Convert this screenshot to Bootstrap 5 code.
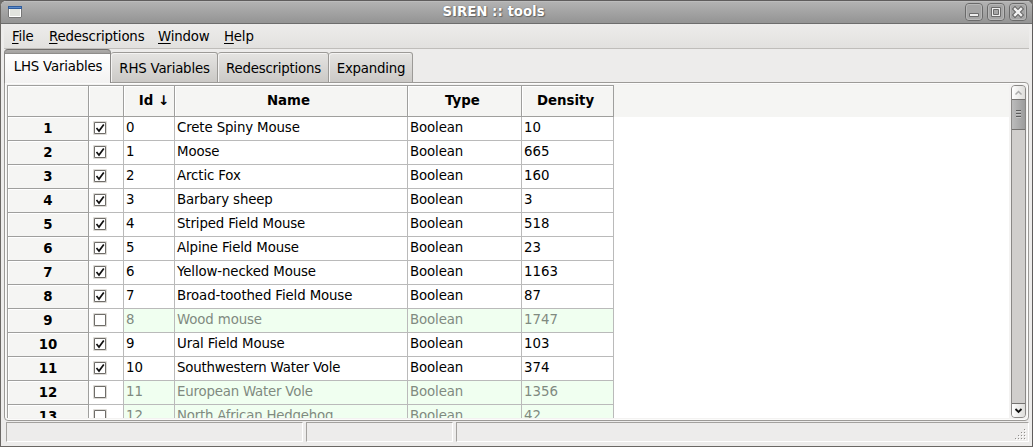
<!DOCTYPE html>
<html lang="en">
<head>
<meta charset="utf-8">
<title>SIREN :: tools</title>
<link href="https://cdn.jsdelivr.net/npm/bootstrap@5.3.0/dist/css/bootstrap.min.css" rel="stylesheet">
<style>
body{font-family:"DejaVu Sans",sans-serif;font-size:13.33px;line-height:16px;color:#000;background:#706e6b;height:447px;overflow:hidden}
.win{height:447px;background:#edeceb;border:1px solid #5f5d5d;border-bottom:1px solid #6b6865;border-left-color:#6b6865;border-radius:6px 6px 0 0;overflow:hidden}
.titlebar{height:23px;background:linear-gradient(#c6c6c6 0,#b2b2b2 1px,#959595 21px);border-bottom:1px solid #6d6d6d;color:#fff;padding:0 5px 0 7px}
.titlebar .caption{font-weight:700;text-shadow:0 0 1px #555,1px 1px 1px #666;line-height:22px;padding-right:0}
.titlebar .btns{gap:4px}
.menubar{height:25px;background:linear-gradient(#edeceb,#e2e1df);border-bottom:1px solid #bfbdba;margin:0 3px;padding-left:8px}
.menubar a{color:#000;text-decoration:none;line-height:25px;height:24px;white-space:nowrap;letter-spacing:-.18px}
.menubar u{text-underline-offset:2px;text-decoration-thickness:1px}
.tabs{height:34px;padding-left:3px;position:relative;z-index:1;margin-bottom:-1px}
.tabs .tb{height:31px;border:1px solid #9c9a97;border-left-width:0;border-radius:3px 3px 0 0;background:linear-gradient(#e5e4e2,#cbc9c6);line-height:31px;white-space:nowrap;box-shadow:inset 1px 1px 0 #f4f3f2;text-align:center;color:#000;padding-left:1px;letter-spacing:-.2px}
.tabs .tb.sel{height:34px;border:1px solid #8a8886;border-bottom:0;border-top-color:#6f6d6b;background:linear-gradient(#aeacaa 0,#a3a19f 3px,#8f8d8b 3px,#8f8d8b 4px,#fff 4px,#f3f2f1 100%);line-height:33px;border-radius:4px 4px 0 0;box-shadow:none}
.pane{height:339px;width:1025px;margin-left:3px;border:1px solid #9c9a97;border-radius:0 4px 4px 4px;background:#f3f2f1;padding:2px;box-shadow:inset 0 0 0 1px #fcfcfb}
.view{width:1002px;height:333px;background:linear-gradient(#f5f5f3 32px,#fff 32px);overflow:hidden}
.sheet{width:607px;border-left:1px solid #9f9f9d}
.sheet .line{display:flex;height:24px}
.sheet .line>div{border-right:1px solid #bababa;border-bottom:1px solid #bababa;padding:2px 0 0 2px;line-height:17px;white-space:nowrap;background:#fff;flex:none}
.sheet .line>.val{letter-spacing:-.12px}
.sheet .line>.val.c2,.sheet .line>.val.c5{letter-spacing:0}
.sheet .line>.hd{background:#f5f5f3;border-color:#9f9f9d;box-shadow:inset 1px 1px 0 #fff;font-weight:700;text-align:center;padding:3px 0 0}
.sheet .heads{height:32px;border-top:1px solid #9f9f9d}
.sheet .heads>.hd{padding-top:6px!important}
.sheet .off>.val{background:#f0fff0;color:#808a80}
.c0{width:81px}.c1{width:35px}.c2{width:51px}.c3{width:233px}.c4{width:114px}.c5{width:92px}
.sheet .line>.c1:not(.hd){padding:4px 0 0 4px}
.c1 svg,.btns svg,.sbar svg{display:block}
.sbar{width:15px;height:333px;border:1px solid #8a8886;border-radius:4px;background:#d0cecc;overflow:hidden}
.sbar .arr{height:13px;background:linear-gradient(90deg,#fff,#deddda)}
.sbar .thumb{height:31px;background:linear-gradient(90deg,#bcbcbc,#9c9c9c);border:solid #757371;border-width:1px 0}
.status{height:20px;margin:1px 3px 0 5px;gap:3px}
.status .cell{border:1px solid;border-color:#a3a19e #fff #fff #a3a19e;height:20px;background:#edeceb}
</style>
</head>
<body>
<div class="win d-flex flex-column">
  <header class="titlebar d-flex align-items-center flex-shrink-0">
    <svg width="14" height="12" viewBox="0 0 14 12"><rect x=".5" y=".5" width="13" height="11" fill="#e2e4df" stroke="#fff"/><path d="M0 0h14v3H0z" fill="#2f5c9c"/><path d="M1 1h12v1H1z" fill="#5b8acb"/><path d="M.5 3v8.500h13V3" fill="none" stroke="#777"/><path d="M1.500 3v7.500h11V3" fill="none" stroke="#fff"/></svg>
    <div class="caption flex-grow-1 text-center">SIREN :: tools</div>
    <div class="btns d-flex">
      <svg width="18" height="18"><use href="#frame"/><path d="M4.500 10.500h9v3h-9z" fill="#eee" stroke="#6b6b6b"/></svg>
      <svg width="18" height="18"><use href="#frame"/><path d="M4.500 4.500h9v9h-9z" fill="#eee" stroke="#6b6b6b"/><path d="M6.500 6.500h5v5h-5z" fill="#a6a6a6" stroke="#6b6b6b"/></svg>
      <svg width="18" height="18"><use href="#frame"/><path d="M6 6l6 6m0-6l-6 6" stroke="#666" stroke-width="4.500" stroke-linecap="square"/><path d="M6 6l6 6m0-6l-6 6" stroke="#f2f2f2" stroke-width="2.400" stroke-linecap="square"/></svg>
    </div>
  </header>
  <nav class="menubar d-flex flex-shrink-0">
    <a href="#" style="width:37px"><u>F</u>ile</a><a href="#" style="width:109px"><u>R</u>edescriptions</a><a href="#" style="width:66px"><u>W</u>indow</a><a href="#"><u>H</u>elp</a>
  </nav>
  <div class="tabs d-flex align-items-end flex-shrink-0">
    <div class="tb sel" style="width:107px">LHS Variables</div><div class="tb" style="width:107px">RHS Variables</div><div class="tb" style="width:111px">Redescriptions</div><div class="tb" style="width:84px">Expanding</div>
  </div>
  <main class="pane d-flex justify-content-between flex-shrink-0">
    <div class="view">
      <div class="sheet" id="sheet">
        <div class="line heads"><div class="hd c0"></div><div class="hd c1"></div><div class="hd c2" style="padding-left:10px">Id ↓</div><div class="hd c3" style="padding-right:5px">Name</div><div class="hd c4" style="padding-right:4px">Type</div><div class="hd c5" style="padding-right:4px">Density</div></div>
      </div>
    </div>
    <div class="sbar">
      <div class="arr"><svg width="13" height="13"><path d="M3.500 8.500l3-3 3 3" fill="none" stroke="#aaa" stroke-width="1.500"/></svg></div>
      <div class="thumb"><svg width="13" height="29"><path d="M4 10.500h5M4 13.500h5M4 16.500h5" stroke="#5c5c5c"/><path d="M4 11.500h5M4 14.500h5M4 17.500h5" stroke="#c4c4c4"/></svg></div>
      <div style="height:273px"></div>
      <div class="arr" style="height:14px;border-top:1px solid #757371"><svg width="13" height="13"><path d="M3.500 5l3 3 3-3" fill="none" stroke="#111" stroke-width="1.800"/></svg></div>
    </div>
  </main>
  <footer class="status d-flex flex-shrink-0">
    <div class="cell" style="width:297px"></div><div class="cell" style="width:147px"></div>
    <div class="cell flex-grow-1 d-flex justify-content-end align-items-end"><svg width="14" height="13" id="grip"></svg></div>
  </footer>
</div>
<svg width="0" height="0" class="position-absolute">
  <symbol id="frame"><rect x=".5" y=".5" width="17" height="17" rx="3.500" fill="#a5a5a5" stroke="#6a6a6a"/><rect x="1.500" y="1.500" width="15" height="15" rx="2.500" fill="none" stroke="#b8b8b8"/></symbol>
  <symbol id="box"><path d="M.5.5h13v13H.5z" fill="none" stroke="#dddbd7"/><path d="M1.500 1.500h11v11h-11z" fill="#fff" stroke="#6f6d69"/></symbol>
  <symbol id="tick"><path d="M3.500 7l2.500 3L10.800 3.500" fill="none" stroke="#111" stroke-width="1.700"/></symbol>
</svg>
<script>
const rows=[["Crete Spiny Mouse",10],["Moose",665],["Arctic Fox",160],["Barbary sheep",3],["Striped Field Mouse",518],["Alpine Field Mouse",23],["Yellow-necked Mouse",1163],["Broad-toothed Field Mouse",87],["Wood mouse",1747,1],["Ural Field Mouse",103],["Southwestern Water Vole",374],["European Water Vole",1356,1],["North African Hedgehog",42,1]];
document.getElementById("sheet").insertAdjacentHTML("beforeend",rows.map(([n,d,off],i)=>`<div class="line${off?" off":""}"><div class="hd c0">${i+1}</div><div class="c1"><svg width="14" height="14"><use href="#box"/>${off?"":'<use href="#tick"/>'}</svg></div><div class="val c2">${i}</div><div class="val c3"${/Water|African/.test(n)?' style="letter-spacing:-.2px"':""}>${n}</div><div class="val c4">Boolean</div><div class="val c5">${d}</div></div>`).join(""));
let g="";
for(let r=0;r<4;r++)for(let c=3-r;c<4;c++)g+=`<rect x="${1+c*3}" y="${r*3+1}" width="1" height="1" fill="#8f8d8a"/><rect x="${2+c*3}" y="${r*3+2}" width="1" height="1" fill="#fff"/>`;
document.getElementById("grip").innerHTML=g;
</script>
<script src="https://cdn.jsdelivr.net/npm/bootstrap@5.3.0/dist/js/bootstrap.bundle.min.js"></script>
</body>
</html>
